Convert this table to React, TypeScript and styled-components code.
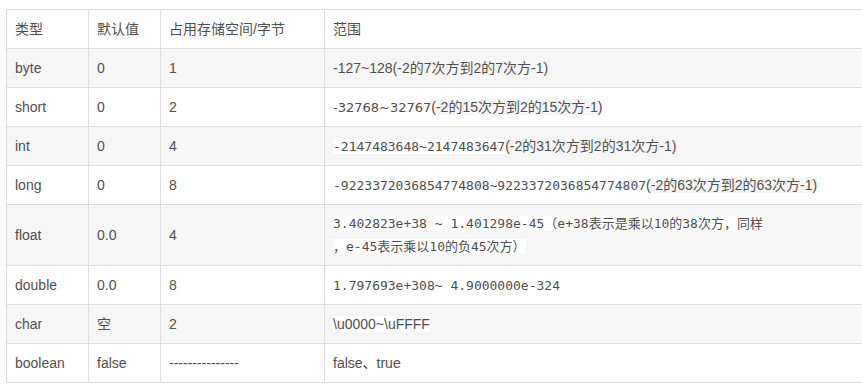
import React from "react";
import styled, { createGlobalStyle } from "styled-components";

const Global = createGlobalStyle`
  html, body { margin: 0; padding: 0; background: #fff; overflow: hidden; }
  body { font-family: "Liberation Sans", "Noto Sans CJK SC", sans-serif; }
`;

const Page = styled.div`
  padding: 9px 0 0 6px;
  width: 856px;
  overflow: hidden;
`;

const Table = styled.table`
  border-collapse: collapse;
  table-layout: fixed;
  width: 900px;
  font-size: 14px;
  color: #4f4f4f;
`;

const Row = styled.tr<{ $striped?: boolean }>`
  background: ${(p) => (p.$striped ? "#f6f6f6" : "#ffffff")};
`;

const Cell = styled.td<{ $tall?: boolean }>`
  border: 1px solid #dddddd;
  padding: 0 8px;
  height: ${(p) => (p.$tall ? "60px" : "38px")};
  line-height: 22px;
  vertical-align: middle;
  text-align: left;
  white-space: nowrap;
  font-weight: normal;
`;

const Head = styled(Cell).attrs({ as: "th" })``;

const Mono = styled.span<{ $bg?: string }>`
  font-family: "DejaVu Sans Mono", "Noto Sans CJK SC", monospace;
  font-size: 13px;
  background: ${(p) => p.$bg ?? "transparent"};
`;

const Wide = styled.span<{ $bg?: string }>`
  font-family: "DejaVu Sans", "Noto Sans CJK SC", sans-serif;
  font-size: 13px;
  background: ${(p) => p.$bg ?? "transparent"};
`;

const Plain = styled.span<{ $bg?: string }>`
  background: ${(p) => p.$bg ?? "transparent"};
`;

const WHITE = "#ffffff";
const GREY = "#f6f6f6";

type RowData = {
  type: string;
  def: string;
  size: string;
  tall?: boolean;
  range: React.ReactNode;
};

const rows: RowData[] = [
  { type: "byte", def: "0", size: "1", range: <Plain>-127~128(-2的7次方到2的7次方-1)</Plain> },
  {
    type: "short",
    def: "0",
    size: "2",
    range: (
      <>
        <Wide>-32768~32767</Wide>
        <Plain $bg={GREY}>(-2的15次方到2的15次方-1)</Plain>
      </>
    ),
  },
  {
    type: "int",
    def: "0",
    size: "4",
    range: (
      <>
        <Mono $bg={WHITE}>-2147483648~2147483647</Mono>
        <Plain>(-2的31次方到2的31次方-1)</Plain>
      </>
    ),
  },
  {
    type: "long",
    def: "0",
    size: "8",
    range: (
      <>
        <Mono $bg={WHITE}>-9223372036854774808~9223372036854774807</Mono>
        <Plain $bg={GREY}>(-2的63次方到2的63次方-1)</Plain>
      </>
    ),
  },
  {
    type: "float",
    def: "0.0",
    size: "4",
    tall: true,
    range: (
      <Mono $bg={WHITE}>
        3.402823e+38 ~ 1.401298e-45（e+38表示是乘以10的38次方，同样
        <br />
        ，e-45表示乘以10的负45次方）
      </Mono>
    ),
  },
  {
    type: "double",
    def: "0.0",
    size: "8",
    range: <Mono $bg={WHITE}>1.797693e+308~ 4.9000000e-324</Mono>,
  },
  {
    type: "char",
    def: "空",
    size: "2",
    range: <Plain $bg={WHITE}>\u0000~\uFFFF</Plain>,
  },
  { type: "boolean", def: "false", size: "---------------", range: <Plain>false、true</Plain> },
];

export default function App() {
  return (
    <Page>
      <Global />
      <Table>
        <colgroup>
          <col style={{ width: 82 }} />
          <col style={{ width: 72 }} />
          <col style={{ width: 164 }} />
          <col />
        </colgroup>
        <thead>
          <Row>
            <Head>类型</Head>
            <Head>默认值</Head>
            <Head>占用存储空间/字节</Head>
            <Head>范围</Head>
          </Row>
        </thead>
        <tbody>
          {rows.map((r, i) => (
            <Row key={r.type} $striped={i % 2 === 0}>
              <Cell $tall={r.tall}>{r.type}</Cell>
              <Cell $tall={r.tall}>{r.def}</Cell>
              <Cell $tall={r.tall}>{r.size}</Cell>
              <Cell $tall={r.tall}>{r.range}</Cell>
            </Row>
          ))}
        </tbody>
      </Table>
    </Page>
  );
}
